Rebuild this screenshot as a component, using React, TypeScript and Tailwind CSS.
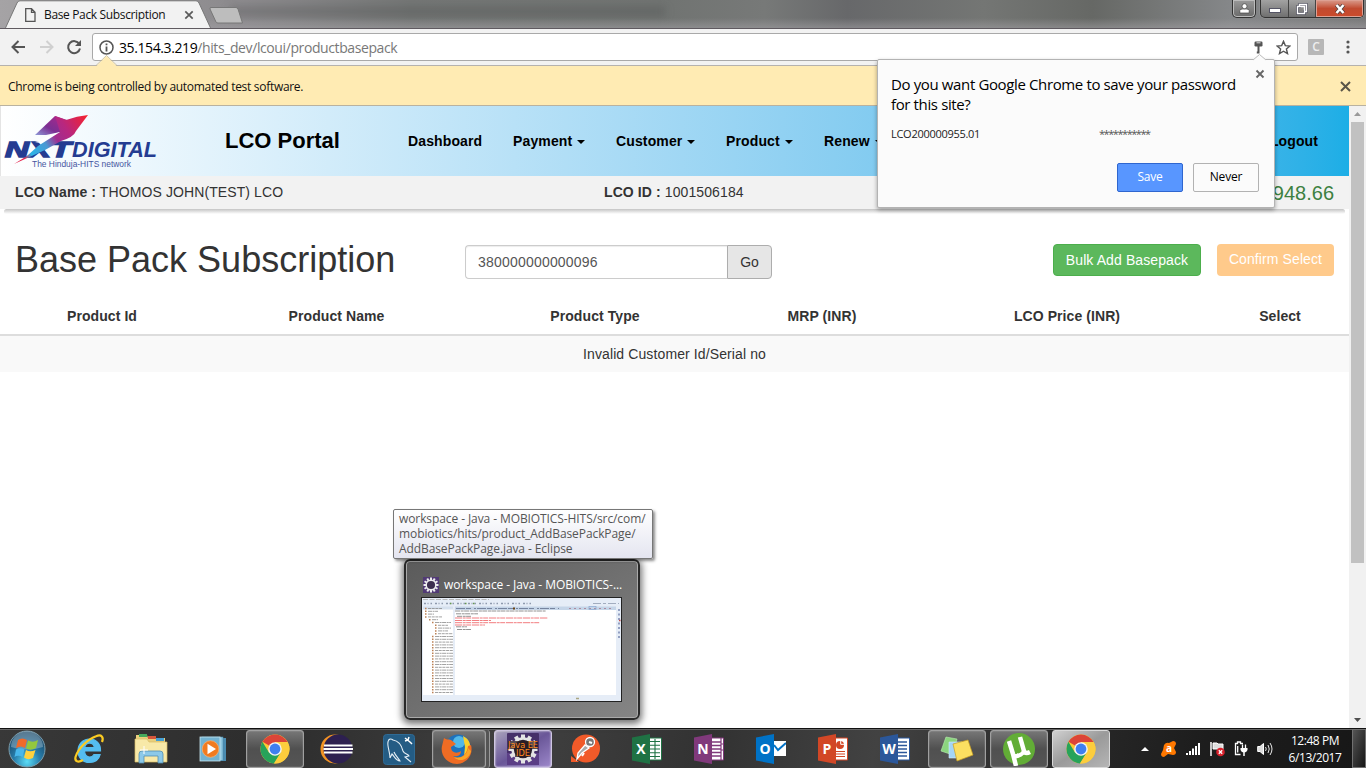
import React from 'react';

const UI = "font-['Open_Sans','Noto_Sans',sans-serif]";

function Chrome({ s = 30 }: { s?: number }) {
  return (
    <svg width={s} height={s} viewBox="0 0 30 30">
      <circle cx="15" cy="15" r="14.5" fill="#fcc934" />
      <path d="M15 15 L2.5 7.7 A14.5 14.5 0 0 1 27.6 8 L15 8Z" fill="#dc4437" />
      <path d="M2.4 7.8 A14.5 14.5 0 0 0 14 29.5 L21 18 L9 18.5Z" fill="#27a35a" />
      <path d="M15 8 H27.6 A14.5 14.5 0 0 1 14 29.5 L21 18.5Z" fill="#fccd3d" />
      <circle cx="15" cy="15" r="6.8" fill="#f4f4f4" />
      <circle cx="15" cy="15" r="5.4" fill="#3f7ff0" />
    </svg>
  );
}

function Office({ c, letter, children }: { c: string; letter: string; children: React.ReactNode }) {
  return (
    <svg width="30" height="30" viewBox="0 0 30 30">
      <path d="M17 4H29.500V26H17Z" fill="#fff" stroke={c} strokeWidth="1" />
      {children}
      <path d="M0 3.500 L18 0 V30 L0 26.500Z" fill={c} />
      <text x="9" y="20" textAnchor="middle" fontSize="14" fontWeight="700" fontFamily="Open Sans" fill="#fff">{letter}</text>
    </svg>
  );
}

function DocLines({ c }: { c: string }) {
  return <path d="M18 8H27M18 11.500H27M18 15H27M18 18.500H27M18 22H27" stroke={c} strokeWidth="1.500" />;
}

const gearTeeth = [0, 30, 60, 90, 120, 150, 180, 210, 240, 270, 300, 330];

function Gear() {
  return (
    <svg width="34" height="32" viewBox="-1 0 34 32">
      <rect width="32" height="32" rx="1" fill="#463069" />
      <rect x="0" y="20" width="32" height="12" fill="#5b3e86" />
      {gearTeeth.map((a) => (
        <rect key={a} x="14" y="1.500" width="4" height="6" fill="#e4e4e4" transform={`rotate(${a} 16 16)`} />
      ))}
      <circle cx="16" cy="16" r="10.500" fill="#2b2030" stroke="#e4e4e4" strokeWidth="2.500" />
      <path d="M1 8H31V16H1ZM8 16H24V24H8Z" fill="#2b1c22" opacity=".75" />
      <text x="1" y="15" fontSize="9" fontFamily="DejaVu Sans" fill="#ff8b1f" textLength="30" lengthAdjust="spacingAndGlyphs">Java EE</text>
      <text x="9" y="23" fontSize="9" fontFamily="DejaVu Sans" fill="#ff8b1f" textLength="14" lengthAdjust="spacingAndGlyphs">IDE</text>
    </svg>
  );
}

const plainBtn = 'border-transparent';
const openBtn = 'rounded-[3px] border-[#a0a0a0] bg-linear-to-b from-[#777] via-[#505050] to-[#555] shadow-[inset_0_0_1px_#ddd]';

const tasks: { n: string; cls: string; icon: React.ReactNode }[] = [
  {
    n: 'ie', cls: plainBtn, icon: (
      <svg width="32" height="32" viewBox="0 0 32 32">
        <path d="M27.500 18H11.500c.2 4 2.500 6 5.300 6 2 0 3.300-1 4-2.300h6.300C25.800 27 22 29.500 16.500 29.500 9.700 29.500 5 24.700 5 18S9.800 6 16.500 6 28 10.800 27.500 18ZM11.700 14.500h9.600c-.2-2.600-2-4.400-4.700-4.400s-4.500 1.800-4.900 4.400Z" fill="#55bdf0" stroke="#55bdf0" strokeWidth="1.200" />
        <path d="M29 9C31 4 28.500 1 23 3.200 14 6.500 5 16 2.500 24 1.500 28.500 5 30 10 27" fill="none" stroke="#fbcb22" strokeWidth="2.200" />
      </svg>),
  },
  {
    n: 'explorer', cls: plainBtn, icon: (
      <svg width="34" height="32" viewBox="0 0 34 32">
        <path d="M2 2H13L14 5H31V29H2Z" fill="#e9cf7c" />
        <path d="M5 1H13V4H5Z" fill="#45a95b" /><path d="M14 3H22V6H14Z" fill="#d6563b" /><path d="M22 5H30V8H22Z" fill="#449ed3" />
        <path d="M1 6H13L15 9H33V29H1Z" fill="#f8e9a8" stroke="#d8bc65" strokeWidth=".7" />
        <path d="M5 30V21Q5 18 8 18H26Q29 18 29 21V30H24V23H10V30Z" fill="#8cc9e9" stroke="#528eb0" strokeWidth=".8" />
        <path d="M10 13V21M6 17H14" stroke="#fff" strokeWidth="1" />
      </svg>),
  },
  {
    n: 'player', cls: plainBtn, icon: (
      <svg width="28" height="28" viewBox="0 0 28 28">
        <rect x="5" y="3" width="22" height="23" fill="#4a8bb0" /><rect x="3" y="2" width="21" height="23.500" fill="#8cc4dd" stroke="#4888a9" strokeWidth=".6" />
        <rect x="1" y="2" width="20" height="24" fill="#72b2d1" stroke="#c6e3ee" strokeWidth=".8" />
        <circle cx="11.500" cy="14" r="8.300" fill="#f17b20" stroke="#ffb16c" strokeWidth=".7" /><path d="M8.500 8.700 17 14 8.500 19.300Z" fill="#fff" />
      </svg>),
  },
  { n: 'chrome', cls: openBtn, icon: <Chrome /> },
  {
    n: 'eclipse', cls: plainBtn, icon: (
      <svg width="34" height="30" viewBox="0 0 34 30">
        <circle cx="15" cy="15" r="14.500" fill="#f39425" /><circle cx="18" cy="15" r="14.500" fill="#2d2050" />
        <path d="M4 11.500H32.500M3.500 15H33M4 18.500H32.500" stroke="#fff" strokeWidth="2" />
      </svg>),
  },
  {
    n: 'mysql', cls: plainBtn, icon: (
      <svg width="32" height="31" viewBox="0 0 32 31">
        <rect x=".5" y=".5" width="31" height="30" rx="3" fill="#245c84" stroke="#2f6b95" />
        <path d="M7 24C7 18 4 12 5 8 5.500 4.500 8 4.500 10 6 17 7 19 13 20 17 21 20 25 20 26 22L22 23 28 28M7 24 9 20C11 22 13 27 17 27 16 25 12 21 11 18" fill="none" stroke="#e5eff6" strokeWidth="1.100" />
        <path d="M22 4 27 8M26 3 25 6 22 7M27 8 29 10" stroke="#fff" strokeWidth="1.500" fill="none" />
      </svg>),
  },
  {
    n: 'firefox', cls: openBtn, icon: (
      <svg width="32" height="31" viewBox="0 0 32 31" className="-ml-1">
        <circle cx="17" cy="13" r="12.500" fill="#1d72bd" /><circle cx="18" cy="8" r="6" fill="#52b8e8" />
        <path d="M22 2C28 5 30 9 29 17L23 22 24 13Z" fill="#fbd02c" />
        <path d="M3 4C5 6 8 5 10 6L15 10 10 13C10 19 16 20 20 17 20 22 15 23 12 22 18 26 26 22 27 12L30 11C33 22 24 30 16 30 6 30-1 21 1 12Z" fill="#ef6c24" />
        <path d="M27 14C26 23 17 25 13 23 18 29 28 26 30 17Z" fill="#f9a628" />
      </svg>),
  },
  { n: 'javaee', cls: 'rounded-[3px] border-[#cfc6e2] bg-linear-to-br from-[#aba4bd] via-[#6a5798] to-[#9d88cb] shadow-[inset_0_0_2px_#fff]', icon: <Gear /> },
  {
    n: 'postman', cls: plainBtn, icon: (
      <svg width="29" height="30" viewBox="0 0 29 30">
        <circle cx="15" cy="14.500" r="14" fill="#f15a29" /><path d="M0 22 8 28H0Z" fill="#f15a29" />
        <circle cx="19" cy="8" r="4.500" fill="#777" stroke="#fff" strokeWidth="1.300" />
        <path d="M14 11 7 19 6 25 11 19 18 14Z" fill="#aaa" stroke="#fff" strokeWidth="1.300" /><path d="M13 19 11 22" stroke="#fff" strokeWidth="2" />
        <path d="M18 8 21 9" stroke="#fff" strokeWidth="2" />
      </svg>),
  },
  { n: 'excel', cls: plainBtn, icon: <Office c="#1f7244" letter="X"><path d="M18 7.500H28M18 11.200H28M18 15H28M18 18.700H28M18 22.500H28M23 5V25" stroke="#1f7244" strokeWidth="1.100" /></Office> },
  { n: 'onenote', cls: plainBtn, icon: <Office c="#80397b" letter="N"><DocLines c="#80397b" /><path d="M27 4V26M27 10H30M27 16H30" stroke="#80397b" strokeWidth="1.200" /></Office> },
  {
    n: 'outlook', cls: plainBtn, icon: (
      <svg width="30" height="30" viewBox="0 0 30 30">
        <path d="M17 7H30V22H17Z" fill="#fff" /><path d="M18 11 22 16 30 9" stroke="#0072c6" strokeWidth="2" fill="none" />
        <path d="M0 3.500 18 0V30L0 26.500Z" fill="#0072c6" /><text x="9" y="20" textAnchor="middle" fontSize="14" fontWeight="700" fontFamily="Open Sans" fill="#fff">O</text>
      </svg>),
  },
  { n: 'powerpoint', cls: plainBtn, icon: <Office c="#d24726" letter="P"><circle cx="22" cy="11" r="4" fill="#d24726" /><path d="M22.700 6V10.300H27" stroke="#fff" fill="none" /><path d="M18 17.500H27M18 20H27M18 22.500H27" stroke="#d24726" strokeWidth="1.200" fill="none" /></Office> },
  { n: 'word', cls: plainBtn, icon: <Office c="#2b579a" letter="W"><DocLines c="#2b579a" /></Office> },
  {
    n: 'notes', cls: openBtn, icon: (
      <svg width="34" height="28" viewBox="0 0 34 28">
        <path d="M6 2 17 4 13 20 1 16Z" fill="#8bd47f" stroke="#b8eeb0" strokeWidth=".6" /><path d="M9 7H22V23H9Z" fill="#a4d5f6" stroke="#d4effe" strokeWidth=".6" />
        <path d="M13 9 28 5 33 20 17 26Z" fill="#fbdf61" stroke="#c99e23" strokeWidth=".7" />
      </svg>),
  },
  {
    n: 'torrent', cls: openBtn, icon: (
      <svg width="34" height="34" viewBox="0 0 34 34">
        <circle cx="17" cy="17" r="16" fill="#62ad36" />
        <path d="M7 9 11 22C12 25 14 25 17 23M18 5 22 19C23 22 26 21 28 20M11 22 14 34" fill="none" stroke="#fff" strokeWidth="4.500" />
        <path d="M13 24C17 24 21 22 22 19" fill="none" stroke="#fff" strokeWidth="4" />
      </svg>),
  },
  { n: 'chrome2', cls: 'rounded-[3px] border-[#d9d9d9] bg-linear-to-br from-[#d0d0d0] via-[#9a9a9a] to-[#b5b5b5]', icon: <Chrome /> },
];

function TitleBar() {
  return (
    <div className="relative flex h-[29px] shrink-0 items-start overflow-hidden border-b border-[#5f5a60] bg-[linear-gradient(90deg,#a5a3a5_0,#8b898c_18%,#747675_30%,#707371_48%,#777978_56%,#67686a_62%,#747674_72%,#666865_80%,#858789_90%,#777_100%)]">
      <div className="absolute left-[230px] top-[7px] h-[9px] w-[435px] bg-[#4b4d4c]/35 blur-[4px]" />
      <div className="absolute left-0 top-[18px] h-[11px] w-full bg-linear-to-b from-transparent to-[#a2a0a4]/60" />
      <svg className="absolute left-0 top-0" width="250" height="29" viewBox="0 0 250 29">
        <path d="M0 29H5L17 3Q18 .8 20 .8H196Q198 .8 199 3L211 29Z" fill="#f2f2f2" stroke="#777" strokeWidth="1" />
        <path d="M211 7.500H236Q237 7.500 238 9L242.500 23H218Q216.500 23 216 22L210 9Q209.500 7.500 211 7.500Z" fill="#bdbdbd" stroke="#777" />
      </svg>
      <div className="relative flex h-7 w-[205px] items-center pl-[25px] pt-[2px]">
        <svg width="11" height="14" viewBox="0 0 11 14" fill="none" stroke="#555"><path d="M.7.7H6.500L10 4.300V13.300H.7ZM6.500.7V4.300H10" strokeWidth="1.300" /></svg>
        <span className="ml-2 w-[140px] whitespace-nowrap text-[12px] tracking-[-0.35px] text-[#111]">Base Pack Subscription</span>
        <svg width="10" height="10" viewBox="0 0 10 10"><path d="M1.300 1.300 8.700 8.700M8.700 1.300 1.300 8.700" stroke="#5a5a5a" strokeWidth="1.700" /></svg>
      </div>
      <div className="relative ml-auto mr-[2px] flex">
        <div className="mr-1 flex h-[18px] w-6 items-center justify-center rounded-b-[5px] border border-t-0 border-[#333] bg-linear-to-b from-[#999] to-[#6b6b6b] shadow-[inset_0_0_0_1px_#bbb]">
          <svg width="11" height="11" viewBox="0 0 11 11" fill="#fff" stroke="#444" strokeWidth=".7"><path d="M.8 10V7.500Q1 6 3.500 6H7.500Q10 6 10.200 7.500V10Z" /><circle cx="5.500" cy="3.200" r="2.500" /></svg>
        </div>
        <div className="flex h-[18px] w-[104px] overflow-hidden rounded-b-[5px] border border-t-0 border-[#333] bg-linear-to-b from-[#a2a2a2] to-[#707070] shadow-[0_0_1px_#ddd]">
          <div className="flex w-7 items-center justify-center border-r border-[#444] pt-1"><svg width="12" height="5" viewBox="0 0 12 5"><rect x=".5" y=".5" width="11" height="4" fill="#fff" stroke="#556" /></svg></div>
          <div className="flex w-[27px] items-center justify-center border-r border-[#444]"><svg width="12" height="12" viewBox="0 0 12 12" fill="none"><path d="M3.500 1.500H10.500V8.500H8.500V10.500H1.500V3.500H3.500Z" stroke="#445" strokeWidth="2.600" /><path d="M3.500 3V1.500H10.500V8.500H9M1.500 3.500H8.500V10.500H1.500Z" stroke="#fff" strokeWidth="1.400" /></svg></div>
          <div className="flex flex-1 items-center justify-center bg-linear-to-b from-[#d89a8b] via-[#c14a30] to-[#cc4b2b] shadow-[inset_0_0_0_1px_#dda093]"><svg width="12" height="10" viewBox="0 0 12 10"><path d="M2.500 1 9.500 9M9.500 1 2.500 9" stroke="#4f4040" strokeWidth="4" /><path d="M2.500 1 9.500 9M9.500 1 2.500 9" stroke="#fff" strokeWidth="2.500" /></svg></div>
        </div>
      </div>
    </div>
  );
}

function Toolbar() {
  return (
    <div className="relative flex h-[37px] shrink-0 items-center border-b border-[#b5b2ae] bg-[#f2f2f2] pl-[11px]">
      <svg width="15" height="14" viewBox="0 0 15 14" fill="none" stroke="#555" strokeWidth="2"><path d="M14 7H2M7.500 1 1.500 7 7.500 13" /></svg>
      <svg className="ml-[13px]" width="15" height="14" viewBox="0 0 15 14" fill="none" stroke="#d0d0d0" strokeWidth="2"><path d="M1 7H13M7.500 1 13.500 7 7.500 13" /></svg>
      <svg className="ml-3" width="16" height="16" viewBox="0 0 16 16"><path d="M13.300 5A6 6 0 1 0 14 9.500" fill="none" stroke="#555" strokeWidth="2" /><path d="M15 1V7H9Z" fill="#555" /></svg>
      <div className="ml-[10px] flex h-7 w-[1206px] items-center rounded-[3px] border border-[#a9a9a9] bg-white pl-[6px] pr-[6px]">
        <svg width="15" height="15" viewBox="0 0 15 15"><circle cx="7.500" cy="7.500" r="6.500" fill="none" stroke="#555" strokeWidth="1.500" /><path d="M7.500 6.500V11.500M7.500 3.500V5.200" stroke="#555" strokeWidth="1.800" /></svg>
        <span className="ml-[5px] text-[14px] tracking-[-0.4px] text-[#787878]"><span className="text-black">35.154.3.219</span>/hits_dev/lcoui/productbasepack</span>
        <svg className="ml-auto" width="9" height="13" viewBox="0 0 9 13"><rect x=".5" y=".5" width="8" height="5" rx="1.200" fill="#555" /><path d="M2.500 1.800H6.500" stroke="#fff" strokeWidth=".8" /><path d="M4.500 5V12.500M4.500 11.500H2.800" stroke="#555" strokeWidth="2" /></svg>
        <svg className="ml-[13px]" width="15" height="15" viewBox="0 0 15 15"><path d="M7.500 1.300 9.300 5.600 13.900 6 10.400 9 11.500 13.600 7.500 11.200 3.500 13.600 4.600 9 1.100 6 5.700 5.600Z" fill="none" stroke="#555" strokeWidth="1.400" /></svg>
      </div>
      <div className="ml-[10px] flex size-4 items-center justify-center rounded-[1px] bg-[#b7b7b7] text-[12px] font-semibold text-[#eee]">C</div>
      <svg className="ml-[22px]" width="4" height="14" viewBox="0 0 4 14" fill="#555"><circle cx="2" cy="2" r="1.600" /><circle cx="2" cy="7" r="1.600" /><circle cx="2" cy="12" r="1.600" /></svg>
      <svg className="absolute left-[96px] top-[26px]" width="21" height="12" viewBox="0 0 21 12"><path d="M.5 11 10.500 1 20.500 11V12H.5Z" fill="#ffebb3" /><path d="M0 10.500 10.500.5 21 10.500" fill="none" stroke="#c5b994" strokeWidth=".8" /></svg>
    </div>
  );
}

function Logo() {
  return (
    <svg width="160" height="70" viewBox="0 0 160 70">
      <defs>
        <linearGradient id="bird" gradientUnits="userSpaceOnUse" x1="14" y1="58" x2="86" y2="10">
          <stop offset="0" stopColor="#e5224b" /><stop offset=".12" stopColor="#e5224b" /><stop offset=".22" stopColor="#2ab5e8" /><stop offset=".42" stopColor="#4a9ad4" /><stop offset=".56" stopColor="#a02d90" /><stop offset=".72" stopColor="#b8277f" /><stop offset="1" stopColor="#f5222f" />
        </linearGradient>
        <linearGradient id="wing" x1="0" y1="1" x2="1" y2="0"><stop offset="0" stopColor="#8e9bd8" /><stop offset=".4" stopColor="#7b2f93" /><stop offset="1" stopColor="#b1278a" /></linearGradient>
      </defs>
      <text x="4" y="51" fontSize="22" fontWeight="700" fontStyle="italic" fontFamily="Liberation Sans" fill="#243c91" stroke="#243c91" strokeWidth="1.400" textLength="66" lengthAdjust="spacingAndGlyphs">NXT</text>
      <text x="71" y="51" fontSize="22.500" fontWeight="700" fontStyle="italic" fontFamily="Liberation Sans" fill="#243c91" textLength="85" lengthAdjust="spacingAndGlyphs">DIGITAL</text>
      <path d="M34 29 54 10 66 14 59 26 45 29Z" fill="url(#wing)" />
      <path d="M34 36 47 30 59 26 51 33 42 38Z" fill="#fff" opacity=".8" />
      <path d="M54 10Q60 12 65 14 76 10 87 9L75 25Q73 31 60 35L44 44 13 58 26 50 37 40 59 26Z" fill="url(#bird)" />
      <text x="31" y="61" fontSize="8.500" fontWeight="400" fontFamily="Liberation Sans" fill="#4555a0" textLength="99" lengthAdjust="spacingAndGlyphs">The Hinduja-HITS network</text>
    </svg>
  );
}

function Caret() {
  return <span className="ml-[5px] inline-block border-x-4 border-t-4 border-x-transparent border-t-black align-middle" />;
}

function PortalHeader() {
  return (
    <>
      <div className="flex h-[70px] items-center bg-linear-to-r from-white to-[#1caee6] text-[14px] font-bold text-black">
        <div className="h-full w-[225px] border-l border-[#e4e4e4]"><Logo /></div>
        <div className="mb-[2px] w-[183px] text-[22px]">LCO Portal</div>
        <div className="w-[105px] tracking-[0.13px]">Dashboard</div>
        <div className="w-[103px] tracking-[0.13px]">Payment<Caret /></div>
        <div className="w-[110px] tracking-[0.13px]">Customer<Caret /></div>
        <div className="w-[98px] tracking-[0.13px]">Product<Caret /></div>
        <div className="tracking-[0.13px]">Renew<Caret /></div>
        <div className="ml-auto mr-[31px] tracking-[0.1px]">Logout</div>
      </div>
      <div className="relative flex h-[33px] items-center bg-[#f2f2f2] px-[15px] text-[14px] tracking-[0.1px] text-[#333]">
        <div className="w-[589px]"><b>LCO Name :</b> THOMOS JOHN(TEST) LCO</div>
        <div><b>LCO ID :</b> 1001506184</div>
        <div className="ml-auto text-[20px] tracking-normal text-[#3c8040]">948.66</div>
      </div>
      <div className="mx-1 h-[5px] rounded-full bg-linear-to-b from-[#c4c4c4] to-transparent" />
    </>
  );
}

const columns = ['Product Id', 'Product Name', 'Product Type', 'MRP (INR)', 'LCO Price (INR)', 'Select'];

function Page() {
  return (
    <div className="flex min-h-0 flex-1 bg-white font-['Liberation_Sans',Arial,sans-serif]">
      <main className="w-[1349px]">
        <PortalHeader />
        <div className="flex h-[83px] items-center px-[15px] pt-[10px]">
          <h1 className="mb-[2px] w-[450px] text-[36px] leading-10 text-[#333]">Base Pack Subscription</h1>
          <div className="mt-[3px] flex h-[34px] w-[307px] text-[14px]">
            <div className="flex w-[262px] items-center rounded-l-[4px] border border-r-0 border-[#ccc] pl-3 tracking-[0.2px] text-[#555] shadow-[inset_0_1px_1px_rgba(0,0,0,.075)]">380000000000096</div>
            <div className="flex w-[45px] items-center justify-center rounded-r-[4px] border border-[#adadad] bg-[#e6e6e6] text-[#333]">Go</div>
          </div>
          <div className="mb-[2px] ml-auto flex items-center gap-4 text-[14px] text-white">
            <div className="flex h-8 w-[148px] items-center justify-center rounded-[4px] border border-[#4cae4c] bg-[#5cb85c] pt-[2px] tracking-[0.1px]">Bulk Add Basepack</div>
            <div className="flex h-8 w-[117px] items-center justify-center rounded-[4px] bg-[#ffca8b] tracking-[0.1px]">Confirm Select</div>
          </div>
        </div>
        <div className="grid h-[39px] grid-cols-[204px_265px_252px_202px_288px_138px] items-center border-b-2 border-[#ddd] pt-[2px] text-center text-[14px] font-bold tracking-[0.08px] text-[#333]">
          {columns.map((c) => <div key={c}>{c}</div>)}
        </div>
        <div className="flex h-9 items-center justify-center bg-[#f9f9f9] text-[14px] tracking-[0.11px] text-[#333]">Invalid Customer Id/Serial no</div>
      </main>
      <div className="flex w-[17px] flex-col items-center justify-between bg-[#f1f1f1] pb-[6px] pt-[6px]">
        <svg width="7" height="4" viewBox="0 0 7 4"><path d="M0 4 3.500 0 7 4Z" fill="#999" /></svg>
        <div className="mb-auto mt-[6px] h-[441px] w-[13px] bg-[#c1c1c1]" />
        <svg width="7" height="4" viewBox="0 0 7 4"><path d="M0 0 3.500 4 7 0Z" fill="#505050" /></svg>
      </div>
    </div>
  );
}

function PasswordBubble() {
  return (
    <div className="absolute left-[877px] top-[59px] h-[149px] w-[398px] rounded-[2px] border border-[#b3b3b3] bg-[#fbfbfb] px-[13px] text-black shadow-[0_2px_4px_rgba(0,0,0,.35)]">
      <svg className="absolute left-[375px] top-[-6px]" width="13" height="8" viewBox="0 0 13 8"><path d="M0 6 6.500.5 13 6V8H0Z" fill="#fbfbfb" /><path d="M0 6 6.500.5 13 6" fill="none" stroke="#bbb" /></svg>
      <svg className="absolute left-[377px] top-[9px]" width="10" height="10" viewBox="0 0 10 10"><path d="M1.500 1.500 8.500 8.500M8.500 1.500 1.500 8.500" stroke="#666" strokeWidth="1.900" /></svg>
      <p className="whitespace-nowrap pt-[14px] text-[15px] leading-5 tracking-[-0.37px]">Do you want Google Chrome to save your password<br />for this site?</p>
      <div className="mt-3 flex h-4 items-center text-[11px] tracking-[-0.28px] text-[#222]">
        <span className="w-[208px]">LCO200000955.01</span><span className="tracking-[-1.45px] text-[#555]">***********</span>
      </div>
      <div className="mt-[21px] flex justify-end gap-[10px] pr-[2px] text-[12px] tracking-[-0.2px]">
        <div className="flex h-[29px] w-[66px] items-center justify-center rounded-[2px] border border-[#2f66cf] bg-[#5896ff] pb-px text-white">Save</div>
        <div className="flex h-[29px] w-[66px] items-center justify-center rounded-[2px] border border-[#b2b2b2] bg-[#fbfbfb] pb-px">Never</div>
      </div>
    </div>
  );
}

const treeRows = Array.from({ length: 31 }, (_, i) => i);
const rowIndent = (i: number) => (i < 4 ? 4 : i < 5 ? 8 : i > 5 && i < 10 ? 14 : 11);

function WindowPreview() {
  return (
    <>
      <div className="absolute left-[404px] top-[559px] flex h-[161px] w-[236px] flex-col rounded-[6px] border-2 border-[#292929] bg-linear-to-br from-[#5b5b5b] to-[#858585] px-[15px] pt-[14px] shadow-[0_2px_7px_2px_rgba(0,0,0,.55),inset_0_0_0_1px_#aaa]">
        <div className="flex h-5 items-center gap-[5px] whitespace-nowrap pl-[2px] text-[12px] tracking-[-0.08px] text-white">
          <svg width="16" height="16" viewBox="0 0 16 16"><rect width="16" height="16" fill="#513a75" />{gearTeeth.map((a) => <rect key={a} x="7" y=".5" width="2" height="3" fill="#eee" transform={`rotate(${a} 8 8)`} />)}<circle cx="8" cy="8" r="4.800" fill="#3d2f4f" stroke="#eee" strokeWidth="1.500" /></svg>
          <span>workspace - Java - MOBIOTICS-...</span>
        </div>
        <svg className="mt-[2px]" width="201" height="105" viewBox="0 0 201 105">
          <rect x=".5" y=".5" width="200" height="104" fill="#e6edf7" stroke="#222" />
          <path d="M2 2.500H68" stroke="#aaa" strokeDasharray="5 1.500" strokeWidth=".8" />
          <path d="M3 6.500H110" stroke="#8e9aae" strokeDasharray="2 1.500 1 2 1.500 3" strokeWidth="1.300" /><path d="M172 6.500H198" stroke="#a2adbf" strokeDasharray="8 2 3 2" strokeWidth="1.200" />
          <path d="M29 6.500h1.500M44 6.500h1.500M52 6.500h1.500" stroke="#66994f" strokeWidth="1.500" />
          <rect x="2" y="10" width="30" height="88" fill="#fff" /><rect x="34" y="10" width="161" height="88" fill="#fff" />
          <rect x="2" y="9.500" width="30" height="3" fill="#d5e0ee" /><rect x="34" y="9.500" width="161" height="3.500" fill="#c5d5e8" />
          <path d="M35 11.500H138" stroke="#7785a0" strokeDasharray="9 1 5 3 2 1" /><path d="M92 11.500h2" stroke="#6a4312" strokeWidth="2" /><path d="M148 11.500H193" stroke="#ac8c9f" strokeDasharray="2 3" /><rect x="168" y="9.500" width="7" height="3" fill="none" stroke="#8ba9d2" strokeWidth=".7" />
          {treeRows.map((i) => <path key={i} d={`M${rowIndent(i)} ${11.5 + i * 2.8}h1.500`} stroke="#bb8054" strokeWidth="1.500" />)}
          {treeRows.map((i) => <path key={'l' + i} d={`M${rowIndent(i) + 3} ${11.5 + i * 2.8}H${i < 5 ? 21 - (i % 3) * 4 : i < 9 ? 27 + (i % 2) * 3 : 32}`} stroke="#8a8a8a" strokeWidth=".8" strokeDasharray={i % 3 ? '4 .6 2 .5' : '3 .7'} />)}
          <path d="M34 14H125M35 16.800H57M36 19.300H50M35 29.800H46M36 32.500H50" stroke="#777" strokeWidth=".8" strokeDasharray="5 .7 3 .4" />
          <path d="M34 21H127M34 23.500H70M34 25.700H119M34 28H64" stroke="#f06e72" strokeWidth=".9" strokeDasharray="7 .7 3 .5 5 .8" />
          <path d="M198 12V41" stroke="#8b98bc" strokeWidth="1.800" strokeDasharray="2 2.500" /><path d="M198 23.500h1.500" stroke="#c74d4d" strokeWidth="1.500" />
          <path d="M155 101.500H158" stroke="#aaa782" strokeWidth="1.500" />
        </svg>
      </div>
      <div className="absolute left-[393px] top-[509px] h-[50px] w-[260px] whitespace-nowrap rounded-[2px] border border-[#777] bg-linear-to-b from-white to-[#e4e5f0] pl-[5px] pt-px text-[12px] leading-[15px] tracking-[-0.09px] text-[#555] shadow-[2px_2px_3px_rgba(0,0,0,.45)]">
        workspace - Java - MOBIOTICS-HITS/src/com/<br />mobiotics/hits/product_AddBasePackPage/<br />AddBasePackPage.java - Eclipse
      </div>
    </>
  );
}

function Taskbar() {
  return (
    <div className="relative flex h-10 shrink-0 items-end border-t border-[#111] bg-[linear-gradient(100deg,#383838_0,#2d2d2d_20%,#404040_38%,#323232_52%,#424242_64%,#2b2b2b_76%,#1d1d1d_88%,#171717_100%)] shadow-[inset_0_1px_0_#666]">
      <div className="flex h-[39px] w-[60px] items-center pl-2">
        <svg width="38" height="38" viewBox="0 0 38 38">
          <defs><radialGradient id="orb" cx=".5" cy=".85" r=".8"><stop offset="0" stopColor="#5bdcf6" /><stop offset=".45" stopColor="#287eac" /><stop offset="1" stopColor="#17405f" /></radialGradient></defs>
          <circle cx="19" cy="19" r="18" fill="url(#orb)" stroke="#7d9eac" /><path d="M3 17A16 16 0 0 1 35 17Q19 22 3 17Z" fill="#a9c4d2" opacity=".45" />
          <path d="M10 10Q14 7 19 10L17 18Q13 15 8 18Z" fill="#f06a2a" /><path d="M20 10.500Q25 13 30 10L28 18Q23 21 18 18.500Z" fill="#93c83e" />
          <path d="M8 19.500Q12 17 16.500 19.500L14.500 27Q10 24.500 6.500 27Z" fill="#48b7eb" /><path d="M18 20Q22 22.500 27.500 20L25 28Q20 30.500 16 27.500Z" fill="#ffd13e" />
        </svg>
      </div>
      <div className="flex gap-1">
        {tasks.map((t) => (
          <div key={t.n} className={t.n === 'firefox' ? 'flex h-[38px] w-[58px] rounded-r-[3px] border-r border-[#999] bg-[#555]' : 'flex h-[38px] w-[58px]'}>
            <div className={`mr-auto flex h-[38px] items-center justify-center border ${t.n === 'firefox' ? 'w-[54px]' : 'w-[58px]'} ${t.cls}`}>{t.icon}</div>
          </div>
        ))}
      </div>
      <div className="ml-[31px] flex h-[38px] items-center text-white">
        <svg width="8" height="4" viewBox="0 0 8 4"><path d="M0 4 4 0 8 4Z" fill="#fff" /></svg>
        <svg className="ml-[12px]" width="16" height="16" viewBox="0 0 16 16"><path d="M3 4Q5 1 8 2L12 0Q15 0 15 3L13 7 15 11Q15 14 12 14L7 13 3 16Q0 16 0 13L2 9Z" fill="#ff7800" /><text x="8" y="11" textAnchor="middle" fontSize="10" fontWeight="700" fontFamily="Open Sans" fill="#fff">a</text></svg>
        <svg className="ml-[9px]" width="15" height="13" viewBox="0 0 15 13" fill="#fff"><path d="M0 10H2V12H0ZM3 8H5V12H3ZM6 5.500H8V12H6ZM9 3H11V12H9ZM12 0H14V12H12Z" /></svg>
        <svg className="ml-[9px]" width="15" height="16" viewBox="0 0 15 16"><path d="M1 1V15" stroke="#fff" strokeWidth="1.500" /><path d="M3 2H7L8 3H13V9H8L7 8H3Z" fill="#ddd" stroke="#fff" /><circle cx="10.500" cy="11" r="4.300" fill="#d9212c" /><path d="M8.800 9.300 12.200 12.700M12.200 9.300 8.800 12.700" stroke="#fff" strokeWidth="1.300" /></svg>
        <svg className="ml-[9px]" width="14" height="16" viewBox="0 0 14 16" fill="none" stroke="#fff"><path d="M6.500 13.500H1.500V2.500H3.500V1H6.500V2.500H9M3.700 5V11.500" strokeWidth="1.300" /><path d="M8.500 3.500V7M11.500 3.500V7" strokeWidth="1.300" /><path d="M6.500 7H13.500V9Q12.500 11.500 10 11.500T6.500 9Z" fill="#fff" stroke="none" /><path d="M10 11V15" strokeWidth="1.500" /></svg>
        <svg className="ml-[9px]" width="16" height="14" viewBox="0 0 16 14" fill="none" stroke="#fff"><path d="M.7 4.500H3L6.500 1.500V12.500L3 9.500H.7Z" fill="#ddd" /><path d="M8.500 5Q10 7 8.500 9M11 3Q13.500 7 11 11M13 1Q17 7 13 13" strokeWidth=".9" /></svg>
        <div className="ml-[15px] w-[54px] whitespace-nowrap text-center text-[12px] leading-[17px] tracking-[-0.45px]"><div>12:48 PM</div><div>6/13/2017</div></div>
      </div>
      <div className="ml-auto h-[39px] w-[14px] border border-[#707070] bg-linear-to-br from-[#555] to-[#171717]" />
    </div>
  );
}

export default function App() {
  return (
    <div className={`relative flex h-[768px] w-[1366px] flex-col overflow-hidden ${UI}`}>
      <TitleBar />
      <Toolbar />
      <div className="flex h-10 shrink-0 items-center justify-between border-b border-[#b9b2a0] bg-[#ffebb3] pl-2 pr-[15px] pt-[2px] text-[12px] tracking-[-0.3px] text-[#111]">
        <span>Chrome is being controlled by automated test software.</span>
        <svg width="11" height="11" viewBox="0 0 11 11"><path d="M1 1 10 10M10 1 1 10" stroke="#5a5548" strokeWidth="2" /></svg>
      </div>
      <Page />
      <Taskbar />
      <WindowPreview />
      <PasswordBubble />
    </div>
  );
}
